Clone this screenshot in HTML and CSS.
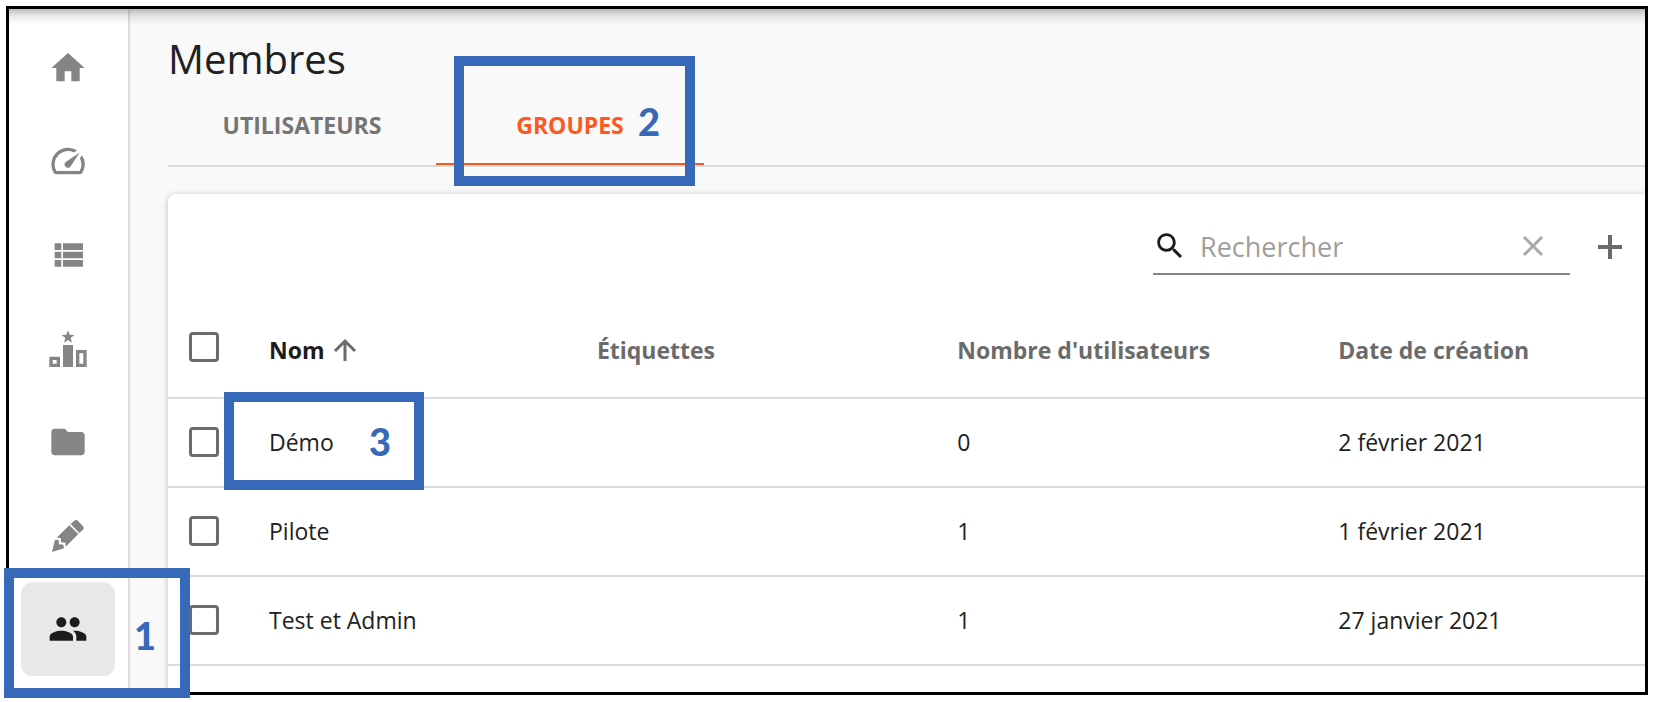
FILE: index.html
```html
<!DOCTYPE html>
<html lang="fr">
<head>
<meta charset="utf-8">
<title>Membres</title>
<link rel="stylesheet" href="styles.css">
</head>
<body>
<div class="frame">
  <nav class="sidebar" aria-label="Navigation principale">
    <button class="nav-item" type="button" aria-label="Accueil">
      <svg class="nav-icon" viewBox="0 0 24 24"><path d="M10 20v-6h4v6h5v-8h3L12 3 2 12h3v8z"/></svg>
    </button>
    <button class="nav-item" type="button" aria-label="Tableau de bord">
      <svg class="nav-icon" viewBox="0 0 24 24"><path d="M20.38 8.57l-1.23 1.85a8 8 0 0 1-.22 7.58H5.07A8 8 0 0 1 15.58 6.85l1.85-1.23A10 10 0 0 0 3.35 19a2 2 0 0 0 1.72 1h13.85a2 2 0 0 0 1.74-1 10 10 0 0 0-.27-10.44zm-9.79 6.84a2 2 0 0 0 2.83 0l5.66-8.49-8.49 5.66a2 2 0 0 0 0 2.83z"/></svg>
    </button>
    <button class="nav-item" type="button" aria-label="Liste">
      <svg class="nav-icon" viewBox="0 0 24 24"><path d="M4 14h4v-4H4v4zm0 5h4v-4H4v4zM4 9h4V5H4v4zm5 5h12v-4H9v4zm0 5h12v-4H9v4zM9 5v4h12V5H9z"/></svg>
    </button>
    <button class="nav-item" type="button" aria-label="Classement">
      <svg class="nav-icon" viewBox="0 0 120 120"><path fill-rule="evenodd" d="M4 83h32v31H4zM14 93v11h12V93zM45 48h30v66H45zM84 63h32v51H84zM94 73v31h12V73zM60 4l5 13 14 1-11 9 4 14-12-8-12 8 4-14-11-9 14-1z"/></svg>
    </button>
    <button class="nav-item" type="button" aria-label="Dossiers">
      <svg class="nav-icon" viewBox="0 0 24 24"><path d="M10 4H4c-1.100 0-1.990.9-1.990 2L2 18c0 1.100.9 2 2 2h16c1.100 0 2-.9 2-2V8c0-1.100-.9-2-2-2h-8l-2-2z"/></svg>
    </button>
    <button class="nav-item" type="button" aria-label="Édition">
      <svg class="nav-icon" viewBox="0 0 120 120"><path d="M68 24l11-10q6-4 11 1l14 14q6 6 1 12L94 51zM64 28l27 26-38 38-1-12-13-1-1-13-12-1zM21 71l11 1 1 13 13 1 2 11-36 11z"/></svg>
    </button>
    <button class="nav-item nav-item-active" type="button" aria-label="Membres" aria-current="page">
      <svg class="nav-icon" viewBox="0 0 24 24"><path d="M16 11c1.660 0 2.990-1.340 2.990-3S17.660 5 16 5c-1.660 0-3 1.340-3 3s1.340 3 3 3zm-8 0c1.660 0 2.990-1.340 2.990-3S9.660 5 8 5C6.340 5 5 6.340 5 8s1.340 3 3 3zm0 2c-2.330 0-7 1.170-7 3.500V19h14v-2.500c0-2.330-4.670-3.500-7-3.500zm8 0c-.29 0-.62.02-.97.05 1.160.84 1.970 1.970 1.970 3.450V19h6v-2.500c0-2.330-4.670-3.500-7-3.500z"/></svg>
    </button>
  </nav>

  <main class="content">
    <h1 class="title">Membres</h1>
    <div class="tabs" role="tablist">
      <button class="tab" type="button" role="tab" aria-selected="false">UTILISATEURS</button>
      <button class="tab tab-active" type="button" role="tab" aria-selected="true">GROUPES</button>
    </div>

    <section class="card">
      <div class="toolbar">
        <div class="search">
          <svg class="search-icon" viewBox="0 0 24 24"><path d="M15.500 14h-.79l-.28-.27C15.410 12.590 16 11.110 16 9.500 16 5.910 13.090 3 9.500 3S3 5.910 3 9.500 5.910 16 9.500 16c1.610 0 3.090-.59 4.230-1.570l.27.28v.79l5 4.990L20.490 19l-4.990-5zm-6 0C7.010 14 5 11.990 5 9.500S7.010 5 9.500 5 14 7.010 14 9.500 11.990 14 9.500 14z"/></svg>
          <input class="search-input" type="text" placeholder="Rechercher" aria-label="Rechercher">
          <button class="icon-button clear" type="button" aria-label="Effacer">
            <svg viewBox="0 0 24 24"><path d="M3 3l18 18M21 3L3 21"/></svg>
          </button>
        </div>
        <button class="icon-button add" type="button" aria-label="Ajouter">
          <svg viewBox="0 0 24 24"><path d="M12 0v24M0 12h24"/></svg>
        </button>
      </div>

      <table class="groups">
        <colgroup><col class="col-check"><col class="col-name"><col class="col-tags"><col class="col-count"><col class="col-date"></colgroup>
        <thead>
          <tr>
            <th scope="col"><input class="check" type="checkbox" aria-label="Tout sélectionner"></th>
            <th scope="col" class="sorted" aria-sort="ascending"><span class="sort-label">Nom <svg class="sort-icon" viewBox="0 0 24 24"><path d="M12 23V3M2 13L12 3l10 10"/></svg></span></th>
            <th scope="col">Étiquettes</th>
            <th scope="col">Nombre d'utilisateurs</th>
            <th scope="col">Date de création</th>
          </tr>
        </thead>
        <tbody>
          <tr>
            <td><input class="check" type="checkbox" aria-label="Sélectionner Démo"></td>
            <td>Démo</td><td></td><td>0</td><td>2 février 2021</td>
          </tr>
          <tr>
            <td><input class="check" type="checkbox" aria-label="Sélectionner Pilote"></td>
            <td>Pilote</td><td></td><td>1</td><td>1 février 2021</td>
          </tr>
          <tr>
            <td><input class="check" type="checkbox" aria-label="Sélectionner Test et Admin"></td>
            <td>Test et Admin</td><td></td><td>1</td><td>27 janvier 2021</td>
          </tr>
        </tbody>
      </table>
    </section>
  </main>
</div>

<div class="callout callout-one">1</div>
<div class="callout callout-two">2</div>
<div class="callout callout-three">3</div>
</body>
</html>
```

FILE: styles.css
```css
* {
  box-sizing: border-box;
}

body {
  position: relative;
  margin: 0;
  min-height: 100vh;
  padding: 6px 10px 7px 6px;
  display: flex;
  background: #fff;
  color: #212121;
  font-family: "Open Sans", "Noto Sans", sans-serif;
  font-size: 23px;
  line-height: 32px;
}

button {
  margin: 0;
  padding: 0;
  border: 0;
  background: none;
  font: inherit;
  color: inherit;
}

svg {
  display: block;
}

.frame {
  position: relative;
  flex: 1;
  min-width: 0;
  display: flex;
  border: 3px solid #000;
  background: #f9f9f9;
}

/* Shadow cast by the application bar */
.frame::before {
  content: "";
  position: absolute;
  inset: 0 0 auto 0;
  height: 16px;
  background: linear-gradient(rgba(0, 0, 0, 0.26), rgba(0, 0, 0, 0.08) 45%, transparent);
}

.sidebar {
  flex: none;
  width: 119px;
  padding: 12px 13px 16px 12px;
  display: flex;
  flex-direction: column;
  background: #fff;
  box-shadow: 1px 0 3px rgba(0, 0, 0, 0.2);
}

.nav-item {
  flex: 1;
  display: flex;
  align-items: center;
  justify-content: center;
  border-radius: 12px;
  color: #858585;
}

.nav-item-active {
  background: #e8e8e8;
  color: #1c1c1c;
}

.nav-icon {
  width: 40px;
  height: 40px;
  fill: currentColor;
}

.content {
  flex: 1;
  min-width: 0;
  padding: 24px 0 0 40px;
  display: flex;
  flex-direction: column;
  overflow: hidden;
}

.title {
  margin: 0;
  font-size: 40px;
  line-height: 52px;
  font-weight: 400;
}

.tabs {
  display: flex;
  border-bottom: 2px solid #dbdbdb;
}

.tab {
  width: 268px;
  height: 80px;
  padding-top: 2px;
  border-bottom: 2px solid transparent;
  color: #757575;
  font-weight: 700;
}

.tab-active {
  border-color: #ff5722;
  color: #ff5722;
}

.card {
  flex: 1;
  margin-top: 27px;
  border-radius: 8px 0 0 0;
  background: #fff;
  box-shadow: 0 1px 6px rgba(0, 0, 0, 0.24);
}

.toolbar {
  display: flex;
  justify-content: flex-end;
  align-items: center;
  gap: 28px;
  padding: 24px 23px 27px 20px;
}

.search {
  width: 417px;
  height: 57px;
  display: flex;
  align-items: center;
  border-bottom: 2px solid #858585;
}

.search-icon {
  flex: none;
  width: 34px;
  height: 34px;
  fill: #1c1c1c;
}

.search-input {
  flex: 1;
  min-width: 0;
  margin: 0;
  padding: 2px 0 0 13px;
  border: 0;
  outline: 0;
  background: none;
  color: #212121;
  font: inherit;
  font-size: 27px;
}

.search-input::placeholder {
  color: #9e9e9e;
  opacity: 1;
}

.icon-button svg {
  width: 24px;
  height: 24px;
  fill: none;
  stroke: currentColor;
}

.clear {
  margin-right: 25px;
  color: #a8a8a8;
  stroke-width: 3px;
}

.add {
  color: #6b6b6b;
  stroke-width: 4px;
}

.groups {
  width: 100%;
  border-collapse: collapse;
  table-layout: fixed;
}

.col-check {
  width: 101px;
}

.col-name {
  width: 22.2%;
}

.col-tags {
  width: 24.4%;
}

.col-count {
  width: 25.8%;
}

.groups th,
.groups td {
  height: 89px;
  padding: 0 0 2px;
  border-bottom: 2px solid #dbdbdb;
  text-align: left;
  vertical-align: middle;
}

.groups th {
  height: 96px;
  padding-bottom: 0;
  color: #6b6b6b;
  font-weight: 700;
}

.groups th:first-child {
  padding-bottom: 5px;
}

.groups .sorted {
  color: #1c1c1c;
}

.sort-label {
  display: flex;
  align-items: center;
  gap: 8px;
}

.sort-icon {
  width: 24px;
  height: 24px;
  fill: none;
  stroke: #6b6b6b;
  stroke-width: 3px;
}

.check {
  appearance: none;
  display: block;
  width: 30px;
  height: 30px;
  margin: 0 0 0 21px;
  border: 3px solid #6b6b6b;
  border-radius: 4px;
  background: #fff;
}

/* Numbered step markers laid over the page */
.callout {
  position: absolute;
  display: flex;
  align-items: center;
  justify-content: flex-end;
  border: 10px solid #3869b9;
  color: #3869b9;
  font-family: Lato, sans-serif;
  font-size: 38px;
  font-weight: 900;
  line-height: 40px;
}

.callout-one {
  left: 4px;
  top: 568px;
  width: 186px;
  height: 130px;
  padding: 4px 24px 0 0;
}

.callout-two {
  left: 454px;
  top: 56px;
  width: 241px;
  height: 130px;
  padding-right: 25px;
}

.callout-three {
  left: 224px;
  top: 392px;
  width: 200px;
  height: 98px;
  padding-right: 23px;
}
```
